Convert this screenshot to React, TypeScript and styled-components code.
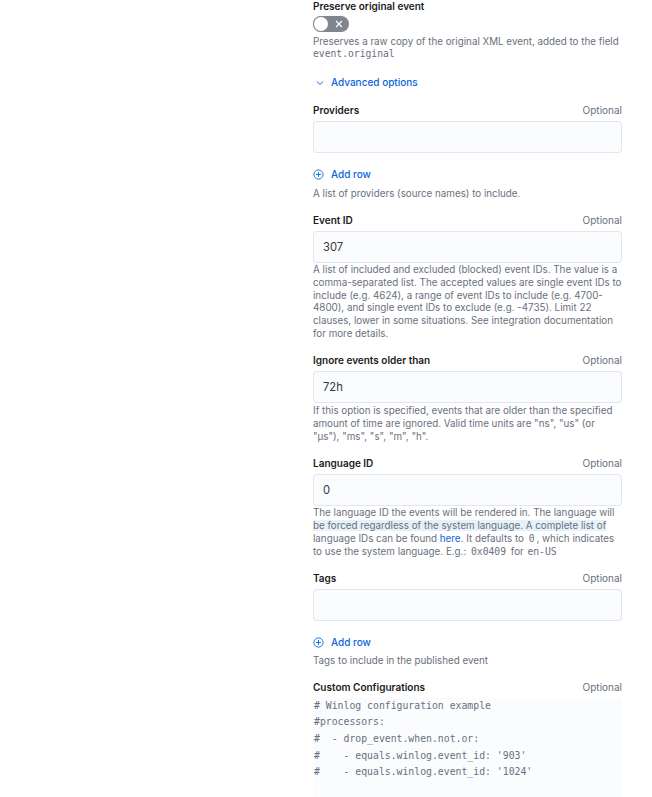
import React from "react";
import styled, { createGlobalStyle } from "styled-components";

const BLUE = "#0b64dd";

const GlobalStyle = createGlobalStyle`
  html, body { margin: 0; padding: 0; background: #ffffff; }
  body {
    font-family: Inter, "Noto Sans", "Liberation Sans", sans-serif;
    color: #1a1c21;
    -webkit-font-smoothing: antialiased;
  }
`;

const Column = styled.div`
  display: flex;
  flex-direction: column;
  width: 309px;
  margin-left: 313px;
`;

const FormRow = styled.div<{ $gap?: number }>`
  display: flex;
  flex-direction: column;
  margin-top: ${(p) => p.$gap ?? 13.6}px;
`;

const LabelRow = styled.div`
  display: flex;
  justify-content: space-between;
  align-items: baseline;
  height: 12px;
  line-height: 12px;
`;

const Label = styled.span`
  font-size: 10px;
  font-weight: 600;
  color: #1a1c21;
`;

const Optional = styled.span`
  font-size: 10px;
  font-weight: 400;
  color: #69707d;
`;

const Input = styled.div`
  box-sizing: border-box;
  height: 32px;
  margin-top: 5px;
  padding: 0 10px;
  display: flex;
  align-items: center;
  background: #fbfcfd;
  border-radius: 4px;
  box-shadow: inset 0 0 0 1px rgba(17, 43, 134, 0.1);
  font-size: 11.2px;
  color: #343741;
`;

const Help = styled.div<{ $gap?: number }>`
  margin-top: ${(p) => p.$gap ?? 1.5}px;
  font-size: 9.8px;
  line-height: 12.8px;
  color: #69707d;
`;

const Code = styled.code<{ $pad?: number }>`
  font-family: "DejaVu Sans Mono", "Liberation Mono", monospace;
  font-size: 9.7px;
  line-height: 1;
  padding: 0 ${(p) => p.$pad ?? 0}px;
  color: #69707d;
`;

const Link = styled.span`
  color: ${BLUE};
`;

const Mark = styled.span`
  background: #e6f1fa;
`;

const SwitchTrack = styled.div`
  position: relative;
  box-sizing: border-box;
  width: 36px;
  height: 16px;
  margin-top: 4px;
  border-radius: 8px;
  background: #80868f;
  display: flex;
  align-items: center;
  justify-content: flex-end;
  padding-right: 6px;
`;

const SwitchThumb = styled.span`
  position: absolute;
  left: 0;
  top: 0;
  box-sizing: border-box;
  width: 16px;
  height: 16px;
  border-radius: 50%;
  background: #ffffff;
  border: 1px solid #80868f;
`;

const TextButton = styled.div<{ $top: number }>`
  display: flex;
  align-items: center;
  margin-top: ${(p) => p.$top}px;
  height: 13px;
  line-height: 13px;
  font-size: 10px;
  font-weight: 500;
  color: ${BLUE};
`;

const IconSlot = styled.span<{ $pad?: number }>`
  display: inline-flex;
  align-items: center;
  justify-content: flex-start;
  box-sizing: border-box;
  width: 18px;
  height: 13px;
  padding-left: ${(p) => p.$pad ?? 0}px;
`;

const CodeBlock = styled.pre`
  margin: 5px 0 0 0;
  padding: 0 1px;
  height: 110px;
  background: #fbfcfd;
  font-family: "DejaVu Sans Mono", "Liberation Mono", monospace;
  font-size: 9.8px;
  line-height: 16.67px;
  color: #69707d;
  white-space: pre;
  overflow: hidden;
`;

const Chevron = () => (
  <svg width="8" height="8" viewBox="0 0 8 8">
    <polyline points="1,2.5 4,5.5 7,2.5" fill="none" stroke={BLUE} strokeWidth="1" />
  </svg>
);

const PlusCircle = () => (
  <svg width="11" height="11" viewBox="0 0 11 11">
    <circle cx="5.5" cy="5.5" r="4.6" fill="none" stroke={BLUE} strokeWidth="0.9" />
    <line x1="5.5" y1="3" x2="5.5" y2="8" stroke={BLUE} strokeWidth="0.9" />
    <line x1="3" y1="5.5" x2="8" y2="5.5" stroke={BLUE} strokeWidth="0.9" />
  </svg>
);

const Cross = () => (
  <svg width="8" height="8" viewBox="0 0 8 8">
    <line x1="1" y1="1" x2="7" y2="7" stroke="#ffffff" strokeWidth="1.1" />
    <line x1="7" y1="1" x2="1" y2="7" stroke="#ffffff" strokeWidth="1.1" />
  </svg>
);

const AddRow = ({ top }: { top: number }) => (
  <TextButton $top={top}>
    <IconSlot>
      <PlusCircle />
    </IconSlot>
    Add row
  </TextButton>
);

const Field = ({
  label,
  value,
  children,
}: {
  label: string;
  value?: string;
  children?: React.ReactNode;
}) => (
  <>
    <LabelRow>
      <Label>{label}</Label>
      <Optional>Optional</Optional>
    </LabelRow>
    <Input>{value}</Input>
    {children}
  </>
);

export default function App() {
  return (
    <>
      <GlobalStyle />
      <Column>
        <FormRow $gap={0}>
          <LabelRow>
            <Label>Preserve original event</Label>
          </LabelRow>
          <SwitchTrack>
            <SwitchThumb />
            <Cross />
          </SwitchTrack>
          <Help $gap={3.5}>
            Preserves a raw copy of the original XML event, added to the field <Code>event.original</Code>
          </Help>
        </FormRow>

        <TextButton $top={15.4}>
          <IconSlot $pad={3}>
            <Chevron />
          </IconSlot>
          Advanced options
        </TextButton>

        <FormRow $gap={14.5}>
          <Field label="Providers" />
          <AddRow top={15} />
          <Help $gap={7}>A list of providers (source names) to include.</Help>
        </FormRow>

        <FormRow $gap={12.8}>
          <Field label="Event ID" value="307">
            <Help>
              A list of included and excluded (blocked) event IDs. The value is a comma-separated list. The
              accepted values are single event IDs to include (e.g. 4624), a range of event IDs to include
              (e.g. 4700-4800), and single event IDs to exclude (e.g. -4735). Limit 22 clauses, lower in some
              situations. See integration documentation for more details.
            </Help>
          </Field>
        </FormRow>

        <FormRow>
          <Field label="Ignore events older than" value="72h">
            <Help>
              If this option is specified, events that are older than the specified amount of time are
              ignored. Valid time units are "ns", "us" (or "µs"), "ms", "s", "m", "h".
            </Help>
          </Field>
        </FormRow>

        <FormRow>
          <Field label="Language ID" value="0">
            <Help>
              The language ID the events will be rendered in. The language will{" "}
              <Mark>be forced regardless of the system language. A complete list of</Mark> language IDs can
              be found <Link>here</Link>. It defaults to <Code $pad={2}>0</Code>, which indicates to use the
              system language. E.g.: <Code $pad={2}>0x0409</Code> for <Code $pad={1}>en-US</Code>
            </Help>
          </Field>
        </FormRow>

        <FormRow>
          <Field label="Tags" />
          <AddRow top={15} />
          <Help $gap={6}>Tags to include in the published event</Help>
        </FormRow>

        <FormRow $gap={12.6}>
          <LabelRow>
            <Label>Custom Configurations</Label>
            <Optional>Optional</Optional>
          </LabelRow>
          <CodeBlock>
            {`# Winlog configuration example
#processors:
#  - drop_event.when.not.or:
#    - equals.winlog.event_id: '903'
#    - equals.winlog.event_id: '1024'`}
          </CodeBlock>
        </FormRow>
      </Column>
    </>
  );
}
